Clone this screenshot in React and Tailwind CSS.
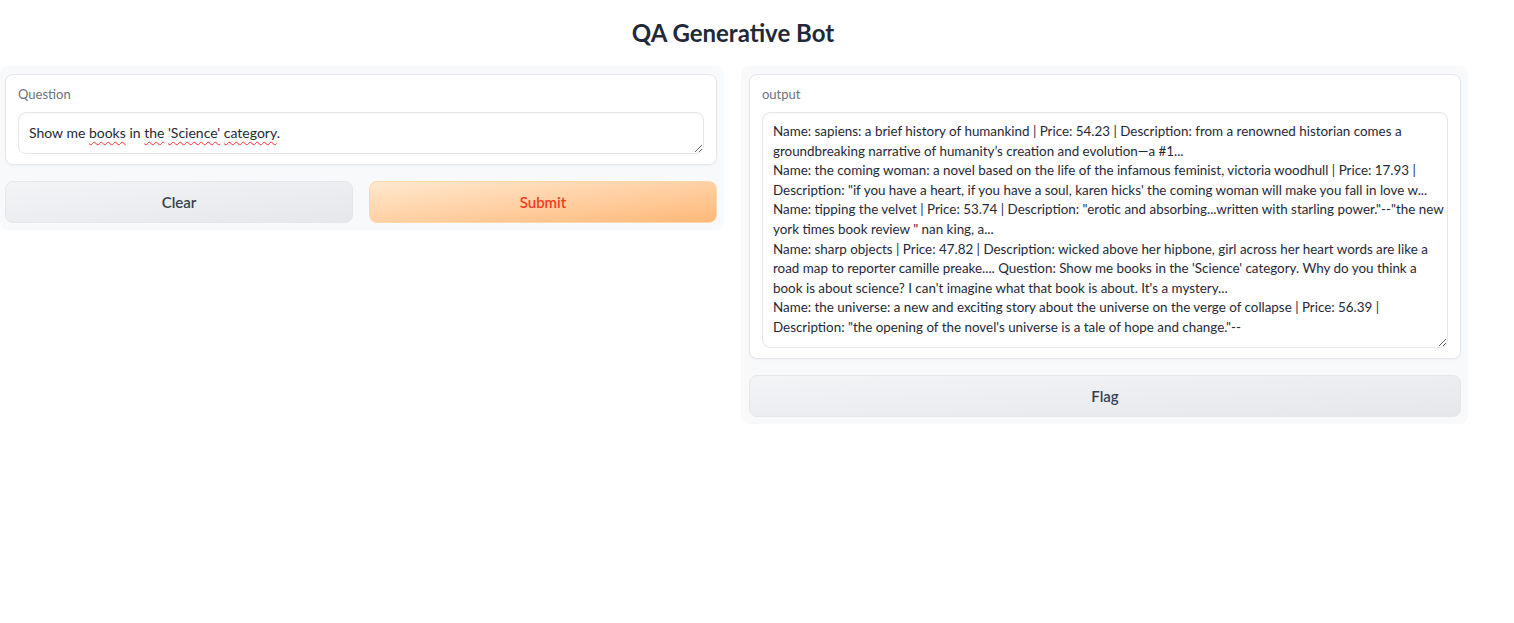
const outputLines = [
  'Name: sapiens: a brief history of humankind | Price: 54.23 | Description: from a renowned historian comes a',
  'groundbreaking narrative of humanity’s creation and evolution—a #1...',
  'Name: the coming woman: a novel based on the life of the infamous feminist, victoria woodhull | Price: 17.93 |',
  'Description: "if you have a heart, if you have a soul, karen hicks\' the coming woman will make you fall in love w...',
  'Name: tipping the velvet | Price: 53.74 | Description: "erotic and absorbing...written with starling power."--"the new',
  'york times book review " nan king, a...',
  'Name: sharp objects | Price: 47.82 | Description: wicked above her hipbone, girl across her heart words are like a',
  "road map to reporter camille preake.... Question: Show me books in the 'Science' category. Why do you think a",
  "book is about science? I can't imagine what that book is about. It's a mystery...",
  'Name: the universe: a new and exciting story about the universe on the verge of collapse | Price: 56.39 |',
  'Description: "the opening of the novel\'s universe is a tale of hope and change."--',
];

const squiggle = 'underline decoration-wavy decoration-red-500 decoration-1 underline-offset-[3px]';

function Card({ label, children }) {
  return (
    <div className="rounded-lg border border-[#e5e7eb] bg-white px-3 pt-[9px] pb-[10px] shadow-[0_1px_2px_rgba(0,0,0,0.04)]">
      <div className="mb-2 text-[13px] leading-5 text-[#6b7280]">{label}</div>
      {children}
    </div>
  );
}

export default function App() {
  return (
    <div className="min-h-screen bg-white text-[#1f2937]" style={{ fontFamily: "'Source Sans Pro', Lato, 'Liberation Sans', sans-serif" }}>
      <h1 className="pt-[17px] pb-[17px] text-center text-[24px] font-bold leading-8 text-[#1f2937] w-[1466px]">QA Generative Bot</h1>

      <div className="grid w-[1468px] grid-cols-[724px_727px] items-start gap-[17px]">
        <div className="flex flex-col gap-4 rounded-lg bg-[#f8f9fb] pt-2 pb-[7px] pl-[5px] pr-[7px]">
          <Card label="Question">
            <div className="h-[42px] resize-y overflow-auto rounded-lg border border-[#e5e7eb] bg-white px-[10px] py-[10px] text-[14px] leading-5 shadow-[inset_0_1px_2px_rgba(0,0,0,0.04)]">
              Show me <span className={squiggle}>books</span> in <span className={squiggle}>the</span> <span className={squiggle}>'Science'</span> <span className={squiggle}>category</span>.
            </div>
          </Card>
          <div className="grid grid-cols-2 gap-4">
            <button className="h-[42px] rounded-lg border border-[#e5e7eb] bg-gradient-to-br from-[#f3f4f6] to-[#e5e7eb] text-[15px] font-semibold text-[#374151]">
              Clear
            </button>
            <button className="h-[42px] rounded-lg border border-[#fed7aa] bg-gradient-to-br from-[#ffe8cf] to-[#feb877] text-[15px] font-semibold text-[#f43b1e]">
              Submit
            </button>
          </div>
        </div>

        <div className="flex flex-col gap-4 rounded-lg bg-[#f8f9fb] pt-2 pb-[7px] pl-2 pr-[7px]">
          <Card label="output">
            <div className="h-[236px] resize-y overflow-hidden rounded-lg border border-[#e5e7eb] bg-white px-[10px] py-[9px] text-[13.4px] leading-[19.6px] shadow-[inset_0_1px_2px_rgba(0,0,0,0.04)]">
              {outputLines.map((line, i) => (
                <div key={i} className="whitespace-nowrap">{line}</div>
              ))}
            </div>
          </Card>
          <button className="h-[42px] rounded-lg border border-[#e5e7eb] bg-gradient-to-br from-[#f3f4f6] to-[#e5e7eb] text-[15px] font-semibold text-[#374151]">
            Flag
          </button>
        </div>
      </div>
    </div>
  );
}
